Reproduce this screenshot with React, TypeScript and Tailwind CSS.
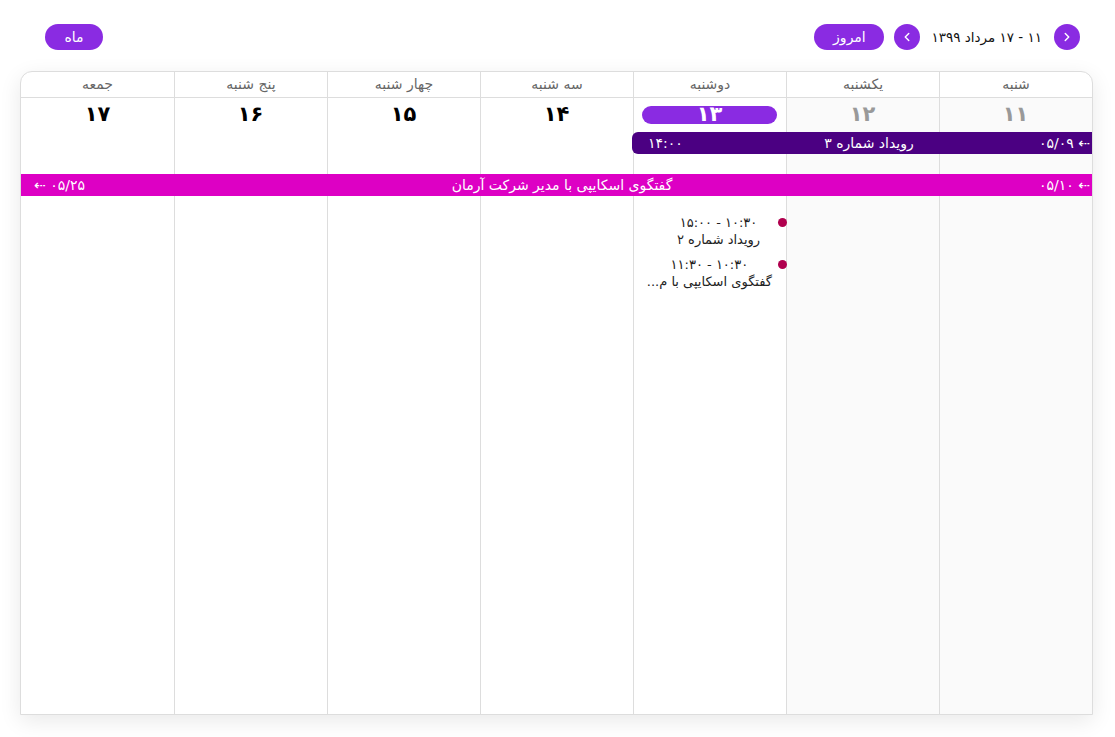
import { ChevronLeft, ChevronRight } from "lucide-react";

const days = [
  { name: "شنبه", num: "۱۱", past: true },
  { name: "یکشنبه", num: "۱۲", past: true },
  { name: "دوشنبه", num: "۱۳", today: true },
  { name: "سه شنبه", num: "۱۴" },
  { name: "چهار شنبه", num: "۱۵" },
  { name: "پنج شنبه", num: "۱۶" },
  { name: "جمعه", num: "۱۷" },
];

const colStart = [
  "col-start-1",
  "col-start-2",
  "col-start-3",
  "col-start-4",
  "col-start-5",
  "col-start-6",
  "col-start-7",
];

function DayEvent({ time, title }: { time: string; title: string }) {
  return (
    <div className="flex items-start">
      <span className="mt-[4px] mr-[-1px] ml-[6px] h-[9px] w-[9px] shrink-0 rounded-full bg-[#b0004e]" />
      <div className="flex flex-1 flex-col items-center text-[13px] leading-[17px] whitespace-nowrap text-[#222]">
        <div>{time}</div>
        <div>{title}</div>
      </div>
    </div>
  );
}

export default function App() {
  return (
    <div
      dir="rtl"
      className="min-h-[737px] w-[1115px] bg-white"
      style={{ fontFamily: '"DejaVu Sans", sans-serif' }}
    >
      <div className="flex items-center pt-[24px] pr-[35px] pl-[45px]">
        <button className="flex h-[26px] w-[26px] items-center justify-center rounded-full bg-[#8a2be2] text-white">
          <ChevronRight size={14} strokeWidth={2.5} />
        </button>
        <span className="mr-[12px] text-[13.5px] text-[#111]">۱۱ - ۱۷ مرداد ۱۳۹۹</span>
        <button className="mr-[11px] flex h-[26px] w-[26px] items-center justify-center rounded-full bg-[#8a2be2] text-white">
          <ChevronLeft size={14} strokeWidth={2.5} />
        </button>
        <button className="mr-[10px] h-[26px] w-[70px] rounded-full bg-[#8a2be2] text-[14px] text-white">
          امروز
        </button>
        <button className="mr-auto h-[26px] w-[58px] rounded-full bg-[#8a2be2] text-[14px] text-white">
          ماه
        </button>
      </div>

      <div className="mt-[21px] mr-[22px] w-[1073px] overflow-hidden rounded-t-[12px] border border-[#ddd] bg-white shadow-[0_6px_22px_rgba(0,0,0,0.09)]">
        <div className="grid h-[642px] grid-cols-7 grid-rows-[26px_34px_22px_20px_22px_1fr]">
          {days.map((d, i) => (
            <div
              key={"h" + i}
              className={`${colStart[i]} row-start-1 flex items-center justify-center border-b border-[#ddd] text-[14px] text-[#666] ${
                i < 6 ? "border-l" : ""
              }`}
            >
              {d.name}
            </div>
          ))}

          {days.map((d, i) => (
            <div
              key={"c" + i}
              className={`${colStart[i]} row-start-2 row-end-7 border-[#ddd] ${i < 6 ? "border-l" : ""} ${
                d.past ? "bg-[#fafafa]" : "bg-white"
              }`}
            />
          ))}

          {days.map((d, i) => (
            <div key={"n" + i} className={`${colStart[i]} row-start-2 text-center`}>
              {d.today ? (
                <div className="mx-[9px] mt-[8px] flex h-[18px] items-center justify-center rounded-full bg-[#8a2be2] text-[21px] font-bold text-white">
                  {d.num}
                </div>
              ) : (
                <div
                  className={`pt-[4px] text-[21px] leading-[24px] font-bold ${
                    d.past ? "text-[#999]" : "text-black"
                  }`}
                >
                  {d.num}
                </div>
              )}
            </div>
          ))}

          <div className="col-start-1 col-end-4 row-start-3 -ml-px grid grid-cols-[1fr_auto_1fr] items-center rounded-l-[6px] bg-[#4b0082] pr-[2px] pl-[16px] text-[14px] text-white">
            <span className="text-right">⇠ ۰۵/۰۹</span>
            <span>رویداد شماره ۳</span>
            <span className="text-left">۱۴:۰۰</span>
          </div>

          <div className="col-start-1 col-end-8 row-start-5 grid grid-cols-[1fr_auto_1fr] items-center bg-[#dd00c4] pr-[2px] pl-[13px] text-[14px] text-white">
            <span className="text-right">⇠ ۰۵/۱۰</span>
            <span>گفتگوی اسکایپی با مدیر شرکت آرمان</span>
            <span className="text-left">۰۵/۲۵ ⇠</span>
          </div>

          <div className="col-start-3 row-start-6 flex flex-col gap-[8px] pt-[18px] pl-[32px]">
            <DayEvent time="۱۰:۳۰ - ۱۵:۰۰" title="رویداد شماره ۲" />
            <DayEvent time="۱۰:۳۰ - ۱۱:۳۰" title="گفتگوی اسکایپی با م..." />
          </div>
        </div>
      </div>
    </div>
  );
}
